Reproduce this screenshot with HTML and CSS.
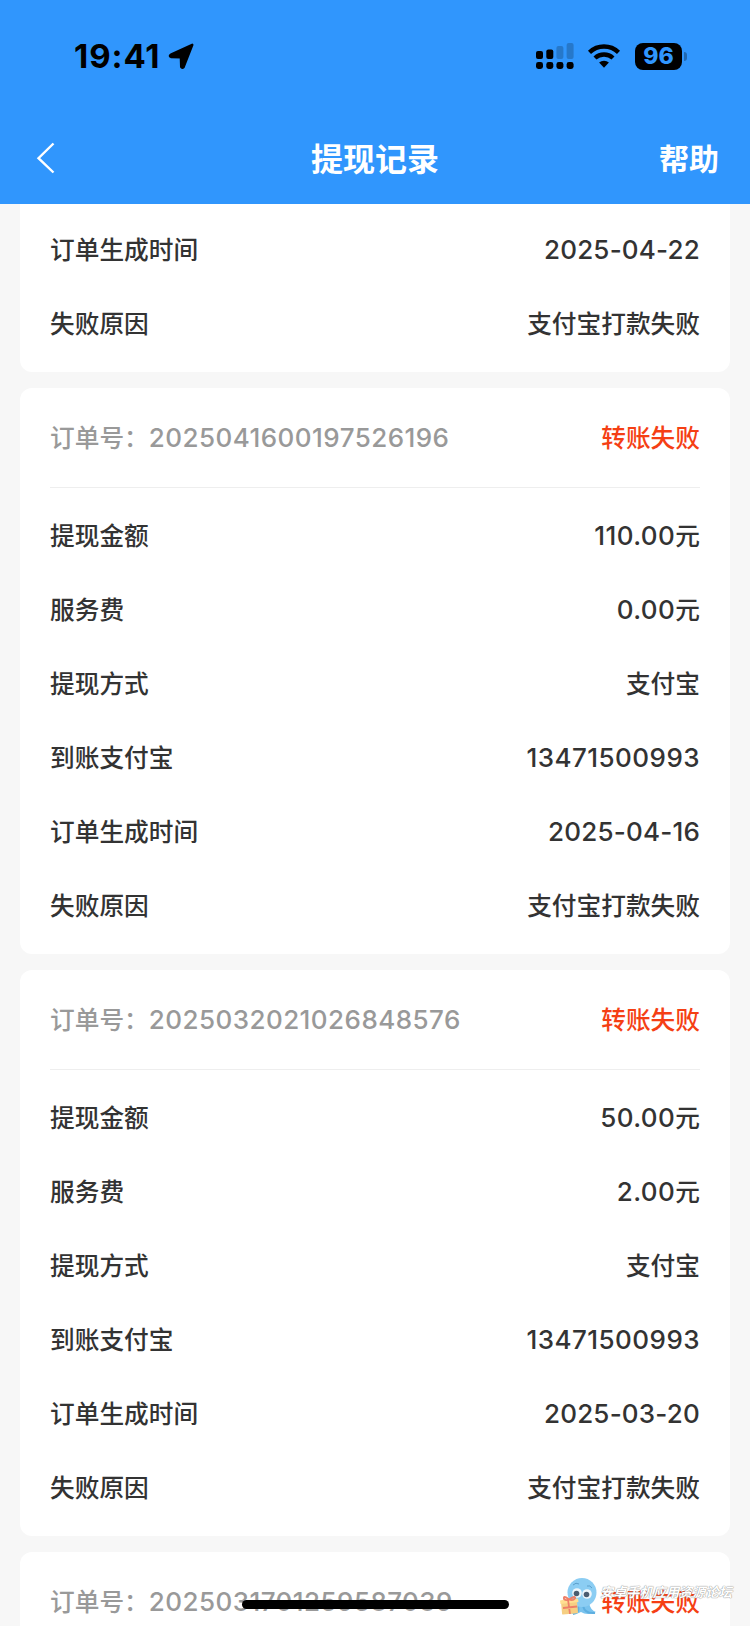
FILE: index.html
```
<!DOCTYPE html>
<html lang="zh-CN">
<head>
    <meta charset="UTF-8">
    <meta name="viewport" content="width=device-width, initial-scale=1.0">
    <title>提现记录</title>
    <link rel="stylesheet" href="styles.css">
</head>
<body>
    <header class="header">
        <div class="status-bar">
            <div class="status-left">
                <span class="time">19:41</span>
                <svg class="location" width="28" height="28" viewBox="0 0 28 28"><path d="M24.5 2.8 15.7 25.3Q14.2 27 13 25L12.7 15.6 3 15.2Q0.5 14 2.8 12.5L24.2 2.6Z" stroke="#000" stroke-width="2" stroke-linejoin="round"/></svg>
            </div>
            <div class="status-right">
                <svg class="signal" width="38" height="28" viewBox="0 0 38 28">
                    <rect x="0" y="9" width="7" height="8" rx="2"/>
                    <rect x="10.3" y="7.5" width="7" height="9.5" rx="2"/>
                    <rect x="20.4" y="4" width="7" height="13" rx="2" opacity=".2"/>
                    <rect x="30.6" y="1" width="7" height="16" rx="2" opacity=".2"/>
                    <rect x="0" y="20" width="7" height="7" rx="2.4"/>
                    <rect x="10.3" y="20" width="7" height="7" rx="2.4"/>
                    <rect x="20.4" y="20" width="7" height="7" rx="2.4"/>
                    <rect x="30.6" y="20" width="7" height="7" rx="2.4"/>
                </svg>
                <svg class="wifi" width="34" height="28" viewBox="0 0 34 28">
                    <path d="M2.5 10.3a21 21 0 0 1 29 0M8 16a13.2 13.2 0 0 1 18 0" fill="none" stroke="#000" stroke-width="4.4"/>
                    <path d="M17 25.8 12.1 20.6a7.2 7.2 0 0 1 9.8 0Z"/>
                </svg>
                <div class="battery">96</div>
            </div>
        </div>
        <nav class="nav-bar">
            <svg class="back" width="20" height="32" viewBox="0 0 20 32"><path d="M17.5 1.5 2.5 16.2 17.5 30.5" fill="none" stroke="#fff" stroke-width="2.4"/></svg>
            <h1 class="title">提现记录</h1>
            <a class="help">帮助</a>
        </nav>
    </header>

    <main class="list">
        <section class="card card-first">
            <div class="row"><span>订单生成时间</span><span class="num date">2025-04-22</span></div>
            <div class="row"><span>失败原因</span><span>支付宝打款失败</span></div>
        </section>

        <section class="card">
            <div class="card-head"><span class="order">订单号：<span class="num">2025041600197526196</span></span><span class="fail">转账失败</span></div>
            <div class="row"><span>提现金额</span><span><span class="num">110.00</span>元</span></div>
            <div class="row"><span>服务费</span><span><span class="num">0.00</span>元</span></div>
            <div class="row"><span>提现方式</span><span>支付宝</span></div>
            <div class="row"><span>到账支付宝</span><span class="num">13471500993</span></div>
            <div class="row"><span>订单生成时间</span><span class="num date">2025-04-16</span></div>
            <div class="row"><span>失败原因</span><span>支付宝打款失败</span></div>
        </section>

        <section class="card">
            <div class="card-head"><span class="order">订单号：<span class="num">2025032021026848576</span></span><span class="fail">转账失败</span></div>
            <div class="row"><span>提现金额</span><span><span class="num">50.00</span>元</span></div>
            <div class="row"><span>服务费</span><span><span class="num">2.00</span>元</span></div>
            <div class="row"><span>提现方式</span><span>支付宝</span></div>
            <div class="row"><span>到账支付宝</span><span class="num">13471500993</span></div>
            <div class="row"><span>订单生成时间</span><span class="num date">2025-03-20</span></div>
            <div class="row"><span>失败原因</span><span>支付宝打款失败</span></div>
        </section>

        <section class="card">
            <div class="card-head"><span class="order">订单号：<span class="num">2025031701259587039</span></span><span class="fail">转账失败</span></div>
        </section>
    </main>

    <div class="home-indicator"></div>

    <div class="watermark">
        <svg width="40" height="40" viewBox="0 0 40 40">
            <path d="M14 24Q8 29 10 35Q16 39 23 35Q29 39 38 35Q32 33 31 25Z" fill="#79c3ee"/>
            <path d="M25 29Q27 37 37 36M20 29Q22 36 15 37" fill="none" stroke="#5eafe0" stroke-width="2"/>
            <ellipse cx="24" cy="15.5" rx="14.5" ry="14.5" fill="#8bcdf3"/>
            <circle cx="19" cy="16" r="4.8" fill="#eef6fb"/>
            <circle cx="29" cy="17" r="4.8" fill="#eef6fb"/>
            <circle cx="18.5" cy="16.5" r="2.8" fill="#4b5c70"/>
            <circle cx="28.5" cy="17.5" r="2.8" fill="#4b5c70"/>
            <path d="M15 8Q18 5 21 7M29 9Q32 8 34 11" fill="none" stroke="#5c9fcb"/>
            <rect x="3.5" y="23" width="16" height="14" rx="1" fill="#f6cf83" transform="rotate(-5 11 30)"/>
            <path d="M2 23.5 20 21.5 20.5 25 2.5 27Z" fill="#ffdf91"/>
            <path d="M10 22.5 12 37M5 31 19 29.5M10.5 22Q5 18 6 22Q8 24 11 22.5Q18 18 17 21.5Q15 24 11 22.5" fill="none" stroke="#ee7f68" stroke-width="1.8"/>
        </svg>
        <span class="watermark-name">安卓手机应用资源论坛</span>
    </div>
</body>
</html>
```
FILE: styles.css
```
body {
    margin: 0;
    height: 1626px;
    position: relative;
    overflow: hidden;
    background-color: #f7f7f7;
    color: #333;
    font-family: Inter, "Noto Sans CJK SC", sans-serif;
    font-size: 24.7px;
    font-weight: 500;
}

.header {
    height: 204px;
    background-color: #3096fd;
}

.status-bar {
    display: flex;
    justify-content: space-between;
    height: 112px;
    padding: 0 68px 0 74px;
}

.status-left,
.status-right {
    display: flex;
    align-items: center;
}

.time {
    color: #000;
    font-size: 33px;
    font-weight: 750;
    letter-spacing: 0.9px;
}

.location {
    margin-left: 8px;
}

.wifi {
    margin: 0 14px 0 13px;
}

.battery {
    position: relative;
    width: 47px;
    height: 27px;
    border-radius: 8px;
    background-color: #000;
    color: #3096fd;
    font-size: 23px;
    font-weight: 800;
    line-height: 27px;
    text-align: center;
}

.battery::after {
    content: "";
    position: absolute;
    right: -5px;
    top: 9px;
    width: 3px;
    height: 9px;
    border-radius: 0 3px 3px 0;
    background-color: rgba(0, 0, 0, 0.3);
}

.nav-bar {
    display: grid;
    grid-template-columns: 1fr auto 1fr;
    align-items: center;
    height: 92px;
    padding: 0 31px 0 36px;
    box-sizing: border-box;
    color: #fff;
}

.title {
    margin: 0 5px 0 0;
    padding-bottom: 3px;
    font-size: 32px;
    font-weight: 700;
}

.help {
    justify-self: end;
    padding-bottom: 3px;
    font-size: 30px;
    font-weight: 700;
}

.list {
    display: flex;
    flex-direction: column;
    gap: 16px;
    padding: 0 20px;
}

.card {
    padding: 0 30px 11px;
    border-radius: 12px;
    background-color: #fff;
}

.card-first {
    padding-top: 9px;
    border-radius: 0 0 12px 12px;
}

.card-head {
    display: flex;
    justify-content: space-between;
    align-items: center;
    height: 99px;
    margin-bottom: 11px;
    border-bottom: 1px solid #eee;
}

.card-head,
.row {
    line-height: 36px;
}

.order {
    color: #999;
}

.fail {
    color: #f53f14;
}

.row {
    display: flex;
    justify-content: space-between;
    align-items: center;
    height: 74px;
}

.num {
    font-size: 26px;
    font-weight: 530;
    letter-spacing: 0.45px;
}

.date {
    letter-spacing: 0.2px;
}

.home-indicator {
    position: absolute;
    left: 242px;
    top: 1600px;
    width: 267px;
    height: 9px;
    border-radius: 5px;
    background-color: #000;
}

.watermark {
    position: absolute;
    left: 558px;
    top: 1577px;
    display: flex;
    gap: 2px;
}

.watermark-name {
    padding-top: 7px;
    color: #fff;
    font-size: 13.2px;
    font-style: italic;
    font-weight: 700;
    line-height: 16px;
    text-shadow: 0 0 1px #888, 0 0 1px #999;
}
```
